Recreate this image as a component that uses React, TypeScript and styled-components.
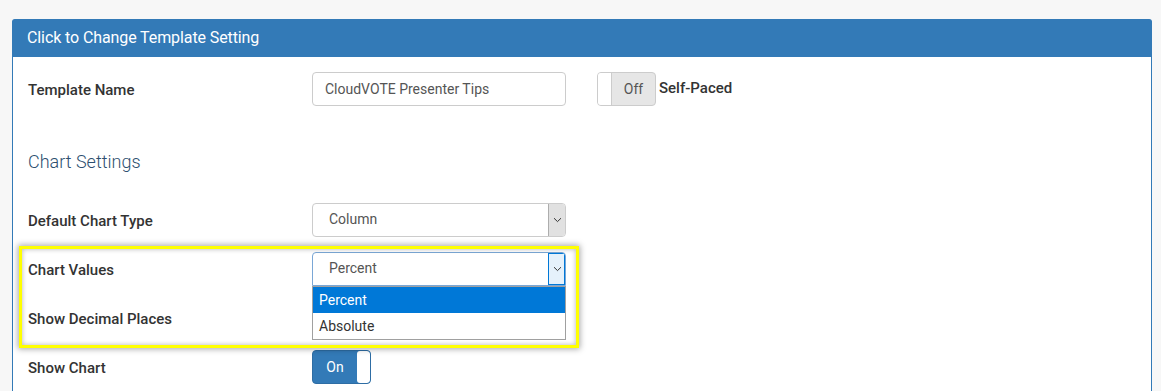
import React from 'react';
import styled, { createGlobalStyle, css } from 'styled-components';

const GlobalStyle = createGlobalStyle`
	html, body {
		margin: 0;
		padding: 0;
		background: #f7f7f7;
		font-family: Roboto, 'Liberation Sans', Arial, sans-serif;
		color: #333;
	}
`;

function Chevron() {
	return (
		<svg width='9' height='6' viewBox='0 0 9 6'>
			<path d='M1 1.2L4.5 4.6L8 1.2' fill='none' stroke='#333' strokeWidth='1' />
		</svg>
	);
}

function Toggle({ on }: { on: boolean }) {
	return (
		<StyledToggle $on={on}>
			{on ? (
				<>
					<span className='toggleLabel'>On</span>
					<span className='toggleKnob' />
				</>
			) : (
				<>
					<span className='toggleKnob' />
					<span className='toggleLabel'>Off</span>
				</>
			)}
		</StyledToggle>
	);
}

function Select({ value, focused }: { value: string; focused?: boolean }) {
	return (
		<StyledSelect $focused={focused}>
			<span className='selectValue'>{value}</span>
			<span className='selectArrow'>
				<Chevron />
			</span>
		</StyledSelect>
	);
}

export default function App() {
	return (
		<>
			<GlobalStyle />
			<Page>
				<Panel>
					<PanelHeader>Click to Change Template Setting</PanelHeader>
					<PanelBody>
						<Row>
							<Label>Template Name</Label>
							<Control>
								<TextInput>CloudVOTE Presenter Tips</TextInput>
							</Control>
							<Control>
								<Toggle on={false} />
								<InlineLabel>Self-Paced</InlineLabel>
							</Control>
						</Row>

						<SectionTitle>Chart Settings</SectionTitle>

						<Row>
							<Label>Default Chart Type</Label>
							<Control>
								<Select value='Column' />
							</Control>
						</Row>

						<Highlighted>
							<Row>
								<Label>Chart Values</Label>
								<Control>
									<Select value='Percent' focused />
									<DropdownList>
										<Option $active>Percent</Option>
										<Option>Absolute</Option>
									</DropdownList>
								</Control>
							</Row>
							<Row>
								<Label>Show Decimal Places</Label>
								{/* its switch sits under the open list */}
								<Control />
							</Row>
							<HighlightFrame />
						</Highlighted>

						<Row>
							<Label>Show Chart</Label>
							<Control>
								<Toggle on />
							</Control>
						</Row>
					</PanelBody>
				</Panel>
			</Page>
		</>
	);
}

const Page = styled.div`
	padding: 19px 9px 0 12px;
	height: 372px;
	overflow: hidden;
`;

const Panel = styled.div`
	width: 1140px;
	box-sizing: border-box;
	border: 1px solid #337ab7;
	border-radius: 4px 4px 0 0;
	background: #fff;
`;

const PanelHeader = styled.div`
	background: #337ab7;
	color: #fff;
	height: 38px;
	line-height: 38px;
	padding: 0 15px;
	font-size: 16px;
	letter-spacing: -0.1px;
	margin: -1px -1px 0;
	border-radius: 3px 3px 0 0;
`;

const PanelBody = styled.div`
	padding: 15px 0 20px;
`;

const Row = styled.div`
	display: flex;
	align-items: center;
	height: 34px;
	margin-bottom: 15px;
`;

const Label = styled.div`
	width: 285px;
	padding: 2px 0 0 15px;
	box-sizing: border-box;
	font-size: 15px;
	font-weight: 500;
	color: #333;
`;

const InlineLabel = styled.span`
	font-size: 15px;
	font-weight: 500;
	color: #333;
	margin-left: 3px;
	align-self: flex-start;
	margin-top: 7px;
`;

const Control = styled.div`
	width: 285px;
	padding-left: 14px;
	box-sizing: border-box;
	display: flex;
	align-items: center;
	position: relative;
	height: 34px;
`;

const TextInput = styled.div`
	width: 254px;
	height: 34px;
	box-sizing: border-box;
	border: 1px solid #ccc;
	border-radius: 4px;
	padding: 0 12px;
	font-size: 14px;
	line-height: 32px;
	color: #555;
`;

const StyledToggle = styled.div<{ $on: boolean }>`
	display: flex;
	width: 59px;
	height: 34px;
	box-sizing: border-box;
	border: 1px solid ${(p) => (p.$on ? '#2e6da4' : '#ccc')};
	border-radius: 4px;
	overflow: hidden;
	background: ${(p) => (p.$on ? '#337ab7' : '#e6e6e6')};

	.toggleKnob {
		width: 13px;
		background: #fff;
		${(p) =>
			p.$on
				? css`
						border-radius: 3px;
					`
				: css`
						border-right: 1px solid #ccc;
					`}
	}

	.toggleLabel {
		flex: 1;
		text-align: center;
		font-size: 14px;
		line-height: 32px;
		color: ${(p) => (p.$on ? '#fff' : '#555')};
	}
`;

const StyledSelect = styled.div<{ $focused?: boolean }>`
	width: 254px;
	height: 34px;
	box-sizing: border-box;
	border: 1px solid ${(p) => (p.$focused ? '#7aa7d6' : '#ccc')};
	border-radius: 4px 4px ${(p) => (p.$focused ? '0 0' : '4px 4px')};
	display: flex;
	align-items: stretch;
	overflow: hidden;
	background: #fff;

	.selectValue {
		flex: 1;
		padding-left: 16px;
		font-size: 14px;
		line-height: 31px;
		color: #555;
	}

	.selectArrow {
		width: 16px;
		display: flex;
		align-items: center;
		justify-content: center;
		background: ${(p) => (p.$focused ? '#e5f1fb' : '#e1e1e1')};
		border-left: 1px solid ${(p) => (p.$focused ? '#0078d7' : '#adadad')};
		${(p) =>
			p.$focused &&
			css`
				outline: 1px solid #0078d7;
				outline-offset: -1px;
			`}
	}
`;

const DropdownList = styled.div`
	position: absolute;
	top: 34px;
	left: 14px;
	width: 254px;
	box-sizing: border-box;
	border: 1px solid #a0a0a0;
	background: #fff;
	z-index: 5;
`;

const Option = styled.div<{ $active?: boolean }>`
	height: 26px;
	line-height: 26px;
	padding-left: 6px;
	font-size: 14px;
	color: ${(p) => (p.$active ? '#fff' : '#333')};
	background: ${(p) => (p.$active ? '#0078d7' : '#fff')};
`;

const SectionTitle = styled.h3`
	margin: 46px 0 31px;
	padding-left: 15px;
	font-size: 18px;
	font-weight: 300;
	color: #2d4f6f;
	line-height: 20px;
`;

const Highlighted = styled.div`
	position: relative;
`;

const HighlightFrame = styled.div`
	position: absolute;
	top: -6px;
	left: 6px;
	width: 560px;
	height: 102px;
	box-sizing: border-box;
	border: 3px solid #ffff00;
	box-shadow: 0 0 6px 1px rgba(0, 0, 0, 0.35), inset 0 0 5px rgba(0, 0, 0, 0.3);
	pointer-events: none;
	z-index: 6;
`;
